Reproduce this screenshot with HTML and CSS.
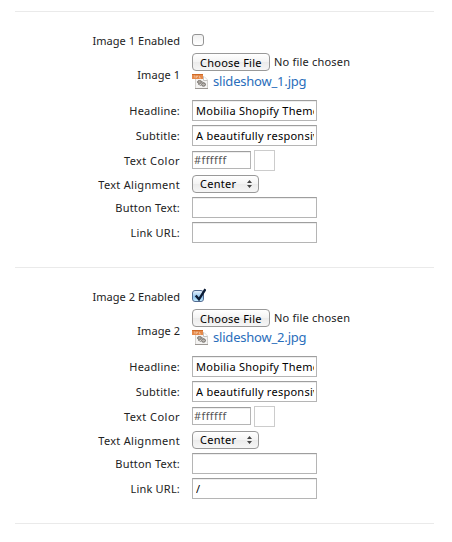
FILE: index.html
```html
<!DOCTYPE html>
<html lang="en">
<head>
<meta charset="utf-8">
<title>Slideshow settings</title>
<link rel="stylesheet" href="styles.css">
</head>
<body>
<svg width="0" height="0" class="defs">
  <symbol id="jpg" viewBox="0 0 16 16">
    <path d="M3.5 2.5h8.5l3.5 3.5v8.5h-12z" fill="#f4f3f2" stroke="#d4d2cf"/>
    <path d="M11.5 2.5v4h4" fill="#fff" stroke="#c4c2bf"/>
    <path d="M3 14.5h13" stroke="#9b9793"/>
    <path d="M0 0h11v5H0z" fill="#e58a4c"/>
    <path d="M0 0h11v1H0z" fill="#cf6a26"/>
    <path d="M2 2h1v2M4.5 4V2h1v1M7.5 2v2h1.5" fill="none" stroke="#f6c9a5" stroke-width=".7"/>
    <ellipse cx="7.5" cy="8" rx="2" ry="1.5" fill="#aaa59f" stroke="#807b76"/>
    <ellipse cx="11.5" cy="10.5" rx="2" ry="1.7" fill="#b8b4af" stroke="#74706b"/>
    <path d="M6 10l3 1.5M9 7l3 2" stroke="#8b8782"/>
  </symbol>
</svg>
<main class="settings">
  <section class="slide">
    <div class="row row-check"><label>Image 1 Enabled</label><span class="check"></span></div>
    <div class="row row-file"><label>Image 1</label>
      <div class="file">
        <div class="picker"><button class="btn">Choose File</button><span class="none">No file chosen</span></div>
        <div class="current"><svg class="icon"><use href="#jpg"/></svg><a>slideshow_1.jpg</a></div>
      </div>
    </div>
    <div class="row"><label>Headline:</label><input class="text" value="Mobilia Shopify Theme"></div>
    <div class="row"><label>Subtitle:</label><input class="text" value="A beautifully responsive"></div>
    <div class="row row-color"><label>Text Color</label><input class="color" value="#ffffff"><span class="swatch"></span></div>
    <div class="row row-select"><label>Text Alignment</label><button class="btn select"><span>Center</span><svg class="arrows" viewBox="0 0 5 8"><path d="M0 3L2.5 0 5 3zM0 5l2.5 3L5 5z" fill="#444"/></svg></button></div>
    <div class="row"><label>Button Text:</label><input class="text"></div>
    <div class="row"><label>Link URL:</label><input class="text"></div>
  </section>
  <section class="slide">
    <div class="row row-check"><label>Image 2 Enabled</label><span class="check on"><svg class="tick" viewBox="0 0 12 13"><path d="M2.5 7l3 3.5L11.5 1" fill="none" stroke="#0c1c35" stroke-width="2.2"/></svg></span></div>
    <div class="row row-file"><label>Image 2</label>
      <div class="file">
        <div class="picker"><button class="btn">Choose File</button><span class="none">No file chosen</span></div>
        <div class="current"><svg class="icon"><use href="#jpg"/></svg><a>slideshow_2.jpg</a></div>
      </div>
    </div>
    <div class="row"><label>Headline:</label><input class="text" value="Mobilia Shopify Theme"></div>
    <div class="row"><label>Subtitle:</label><input class="text" value="A beautifully responsive"></div>
    <div class="row row-color"><label>Text Color</label><input class="color" value="#ffffff"><span class="swatch"></span></div>
    <div class="row row-select"><label>Text Alignment</label><button class="btn select"><span>Center</span><svg class="arrows" viewBox="0 0 5 8"><path d="M0 3L2.5 0 5 3zM0 5l2.5 3L5 5z" fill="#444"/></svg></button></div>
    <div class="row"><label>Button Text:</label><input class="text"></div>
    <div class="row"><label>Link URL:</label><input class="text" value="/"></div>
  </section>
  <hr class="end">
</main>
</body>
</html>
```
FILE: styles.css
```css
* { box-sizing: border-box; }
body { margin: 0; background: #fff; color: #333; font: 11px/16px "Noto Sans", sans-serif; }
.defs { display: block; }
.settings { padding: 11px 18px 0 15px; }
.slide { height: 256px; border-top: 1px solid #eaeaea; padding-top: 21px; }
.end { margin: 0; border: 0; height: 1px; background: #eaeaea; }
.row { display: flex; align-items: flex-start; height: 25px; }
.row-check { height: 20px; }
.row-file { height: 47px; }
.row-select { height: 22px; }
label { width: 165px; margin-right: 12px; padding-top: 3px; text-align: right; letter-spacing: .2px; color: #222; }
.row-check label { padding-top: 0; letter-spacing: .05px; }
.row-file label { padding-top: 14px; letter-spacing: .05px; }
.row-color label { letter-spacing: .45px; }
.row-select label { padding-top: 2px; letter-spacing: .3px; }
input, button { font: inherit; margin: 0; color: #000; appearance: none; border-radius: 0; outline: 0; }
.text { width: 125px; height: 21px; padding: 0 2px 1px 3px; border: 1px solid #b5b5b5; border-top-color: #9e9e9e; box-shadow: inset 0 1px #eee; background: #fff; letter-spacing: .25px; }
.color { width: 59px; height: 18px; margin-top: 1px; padding: 0 1px 1px; border: 1px solid #b5b5b5; border-top-color: #9e9e9e; box-shadow: inset 0 1px #eee; letter-spacing: .4px; color: #555; }
.swatch { width: 21px; height: 21px; margin-left: 3px; border: 1px solid #ccc; }
.btn { display: flex; align-items: center; height: 18px; width: 78px; padding: 1px 7px 0; border: 1px solid #999; border-radius: 4px; background: linear-gradient(#fff, #f3f3f3 50%, #ebebeb 51%, #f6f6f6); letter-spacing: .25px; white-space: nowrap; }
.select { width: 67px; padding: 0 6px 0 7px; justify-content: space-between; }
.arrows { width: 5px; height: 8px; }
.check { position: relative; width: 12px; height: 12px; margin-top: 1px; border: 1px solid #949494; border-radius: 3px; background: linear-gradient(#f0f0f0, #fff); }
.on { border-color: #526b91; background: linear-gradient(#e4f0fb, #8fc3ee 60%, #c4ecff); }
.tick { position: absolute; left: 0; top: -3px; width: 13px; height: 14px; }
.picker { display: flex; height: 19px; }
.none { margin: 1px 0 0 4px; letter-spacing: .2px; color: #222; }
.current { display: flex; gap: 5px; }
.icon { width: 16px; height: 16px; margin-top: 2px; }
.current a { font-size: 13px; line-height: 18px; letter-spacing: -.2px; color: #2a6ebb; }
```
